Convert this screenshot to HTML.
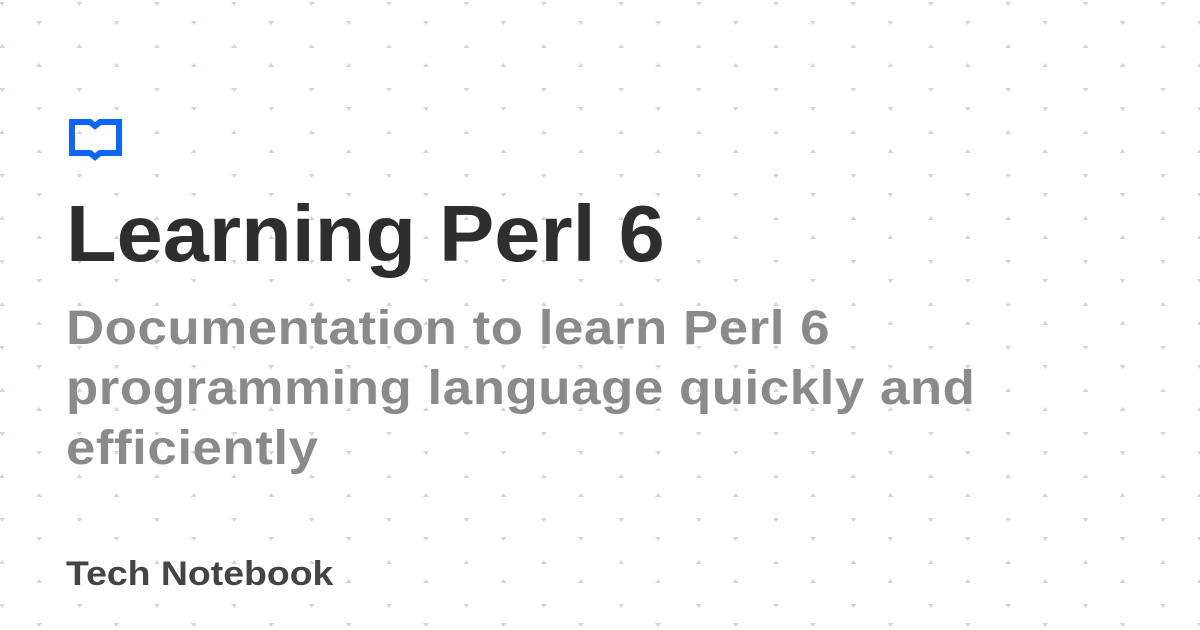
<!DOCTYPE html>
<html><head><meta charset="utf-8"><style>
html,body{margin:0;padding:0}
body{width:1200px;height:630px;overflow:hidden;background:#fff;position:relative;font-family:"Liberation Sans",sans-serif;font-weight:bold}
svg.bg{position:absolute;left:0;top:0}
.t{position:absolute;left:66px;white-space:nowrap;transform-origin:0 0}
#h{top:188px;font-size:80px;color:#2e2e2e;transform:scaleX(1.036)}
#s{top:299px;font-size:48px;line-height:60px;color:#8a8a8a;letter-spacing:0.5px;transform:scaleX(1.1)}
#f{top:555px;font-size:34px;color:#444;transform:scaleX(1.1)}
</style></head><body>
<svg class="bg" width="1200" height="630">
<defs><pattern id="p" x="0" y="0" width="77.4" height="86" patternUnits="userSpaceOnUse">
<path d="M60 31h6l-3 4z" fill="#d3d6db"/>
<path d="M60 77h6l-3-4z" fill="#d3d6db"/>
<path d="M23 12h6l-3 4z" fill="#d3d6db"/>
<path d="M23 58h6l-3-4z" fill="#d3d6db"/>
</pattern></defs>
<rect width="1240" height="660" fill="url(#p)" transform="translate(-24 -10)"/>
</svg>
<svg style="position:absolute;left:69px;top:119px" width="53" height="42" viewBox="0 0 53 42">
<path d="M3 3h18l5 4 5-4h19v31H31l-5 4-5-4H3z" fill="none" stroke="#0a66ff" stroke-width="6" stroke-linejoin="miter"/>
</svg>
<div class="t" id="h">Learning Perl 6</div>
<div class="t" id="s">Documentation to learn Perl 6<br>programming language quickly and<br>efficiently</div>
<div class="t" id="f">Tech Notebook</div>
</body></html>
